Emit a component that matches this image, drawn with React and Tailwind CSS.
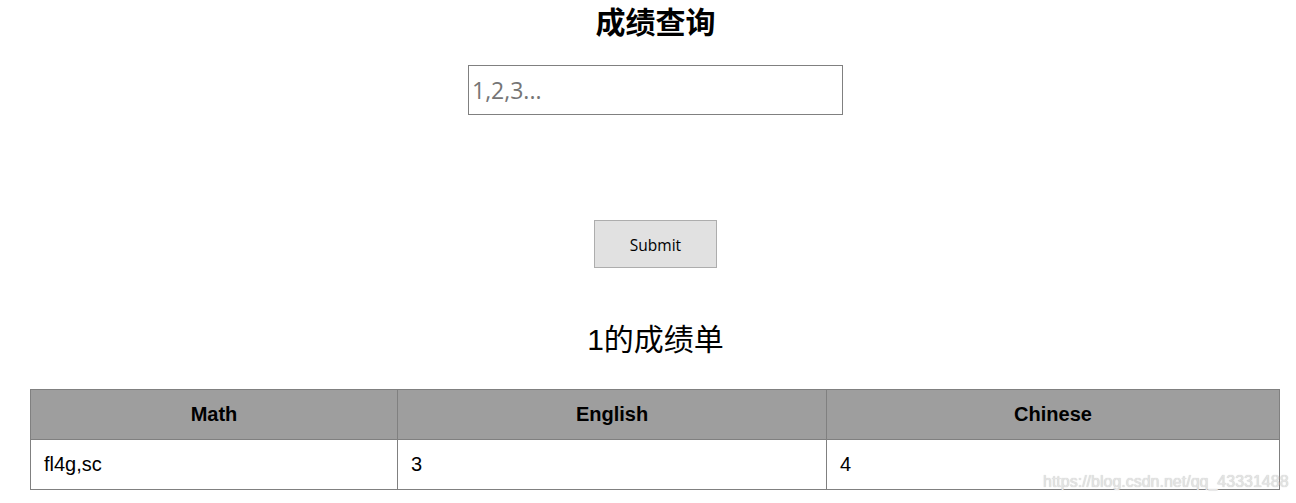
import React, { useState } from 'react';

const cjk = { fontFamily: '"Liberation Sans", "Noto Sans CJK SC", sans-serif' };
const ui = { fontFamily: '"Open Sans", "Noto Sans", sans-serif' };

const App = () => {
    const [ids, setIds] = useState('');

    return (
        <div className="relative w-[1296px] h-[503px] bg-white text-black overflow-hidden" style={cjk}>
            <div className="h-[46px] pl-[15px] flex items-center justify-center">
                <h1 className="text-[30px] font-bold leading-none">成绩查询</h1>
            </div>

            <div className="mt-[19px] pl-[15px] flex justify-center">
                <input
                    type="text"
                    value={ids}
                    onChange={(e) => setIds(e.target.value)}
                    placeholder="1,2,3..."
                    className="w-[375px] h-[50px] border border-[#808080] px-[3px] text-[23px] text-black placeholder-[#757575] outline-none"
                    style={ui}
                />
            </div>

            <div className="mt-[105px] pl-[15px] flex justify-center">
                <button
                    type="button"
                    className="w-[123px] h-[48px] pt-[3px] bg-[#e1e1e1] border border-[#adadad] text-[15.5px] text-black"
                    style={ui}
                >
                    Submit
                </button>
            </div>

            <div className="mt-[50px] h-[44px] pl-[15px] flex items-center justify-center">
                <h2 className="text-[30px] font-normal leading-none">1的成绩单</h2>
            </div>

            <table className="mt-[27px] ml-[30px] w-[1249px] table-fixed border-collapse text-[20px]">
                <colgroup>
                    <col className="w-[367px]" />
                    <col className="w-[429px]" />
                    <col className="w-[453px]" />
                </colgroup>
                <thead>
                    <tr className="bg-[#9e9e9e] h-[50px]">
                        <th className="border border-[#808080] pb-[2px] font-bold text-center">Math</th>
                        <th className="border border-[#808080] pb-[2px] font-bold text-center">English</th>
                        <th className="border border-[#808080] pb-[2px] font-bold text-center">Chinese</th>
                    </tr>
                </thead>
                <tbody>
                    <tr className="h-[50px]">
                        <td className="border border-[#808080] pl-[13px] pb-[2px]">fl4g,sc</td>
                        <td className="border border-[#808080] pl-[13px] pb-[2px]">3</td>
                        <td className="border border-[#808080] pl-[13px] pb-[2px]">4</td>
                    </tr>
                </tbody>
            </table>

            <div className="absolute left-[1043px] top-[474px] text-[16px] text-[#e4e4e4] leading-none whitespace-nowrap" style={{ textShadow: '0 0 1px #bdbdbd' }}>
                https://blog.csdn.net/qq_43331488
            </div>
        </div>
    );
};

export default App;
